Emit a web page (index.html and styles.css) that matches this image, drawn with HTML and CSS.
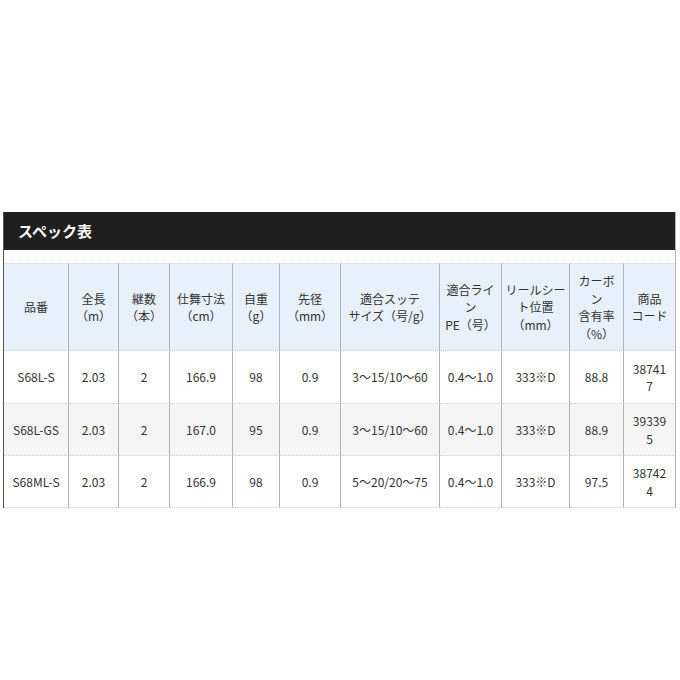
FILE: index.html
```html
<!DOCTYPE html>
<html lang="ja">
<head>
<meta charset="utf-8">
<title>スペック表</title>
<link rel="stylesheet" href="styles.css">
</head>
<body>
<div class="page">
  <section class="spec">
    <h2 class="spec-title">スペック表</h2>
    <table class="spec-table">
      <colgroup>
        <col class="c1"><col class="c2"><col class="c3"><col class="c4"><col class="c5"><col class="c6"><col class="c7"><col class="c8"><col class="c9"><col class="c10"><col class="c11">
      </colgroup>
      <thead>
        <tr>
          <th>品番</th>
          <th>全長<br>（m）</th>
          <th>継数<br>（本）</th>
          <th>仕舞寸法<br>（cm）</th>
          <th>自重<br>（g）</th>
          <th>先径<br>（mm）</th>
          <th>適合スッテ<br>サイズ（号/g）</th>
          <th>適合ライ<br>ン<br>PE（号）</th>
          <th>リールシー<br>ト位置<br>（mm）</th>
          <th>カーボ<br>ン<br>含有率<br>（%）</th>
          <th>商品<br>コード</th>
        </tr>
      </thead>
      <tbody>
        <tr class="r1">
          <td>S68L-S</td><td>2.03</td><td>2</td><td>166.9</td><td>98</td><td>0.9</td><td>3～15/10～60</td><td>0.4～1.0</td><td>333※D</td><td>88.8</td><td>38741<br>7</td>
        </tr>
        <tr class="r2 alt">
          <td>S68L-GS</td><td>2.03</td><td>2</td><td>167.0</td><td>95</td><td>0.9</td><td>3～15/10～60</td><td>0.4～1.0</td><td>333※D</td><td>88.9</td><td>39339<br>5</td>
        </tr>
        <tr class="r3">
          <td>S68ML-S</td><td>2.03</td><td>2</td><td>166.9</td><td>98</td><td>0.9</td><td>5～20/20～75</td><td>0.4～1.0</td><td>333※D</td><td>97.5</td><td>38742<br>4</td>
        </tr>
      </tbody>
    </table>
  </section>
</div>
</body>
</html>
```

FILE: styles.css
```css
html, body {
  margin: 0;
  padding: 0;
  background: #ffffff;
}

.page {
  padding: 212px 0 0 3px;
  font-family: "Noto Sans CJK JP", "Noto Sans", sans-serif;
  color: #333333;
}

.spec {
  width: 671px;
  border-left: 1px solid #555555;
  border-right: 1px solid #b5b5b5;
}

.spec-title {
  margin: 0;
  height: 38px;
  padding-left: 14px;
  background: #1f1f1f;
  color: #ffffff;
  font-size: 15px;
  font-weight: bold;
  line-height: 38px;
}

.spec-table {
  margin-top: 13px;
  width: 671px;
  table-layout: fixed;
  border-collapse: separate;
  border-spacing: 0;
  font-size: 12px;
  line-height: 17.5px;
}

.c1 { width: 65px; }
.c2 { width: 50px; }
.c3 { width: 51px; }
.c4 { width: 63px; }
.c5 { width: 47px; }
.c6 { width: 61px; }
.c7 { width: 99px; }
.c8 { width: 62px; }
.c9 { width: 68px; }
.c10 { width: 54px; }
.c11 { width: 51px; }

.spec-table th,
.spec-table td {
  padding: 0 2px;
  text-align: center;
  vertical-align: middle;
  font-weight: normal;
  border-right: 1px solid #b3b3b3;
  border-bottom: 1px dotted #cfcfcf;
  white-space: nowrap;
}

.spec-table th:last-child,
.spec-table td:last-child {
  border-right: none;
}

.spec-table th {
  background: #e7f0fb;
  height: 86px;
  border-top: 1px dotted #d5dde6;
}

.spec-table .r1 td { height: 52px; }
.spec-table .r2 td,
.spec-table .r3 td { height: 51px; }

.spec-table .alt td {
  background: #f5f5f5;
}
```
